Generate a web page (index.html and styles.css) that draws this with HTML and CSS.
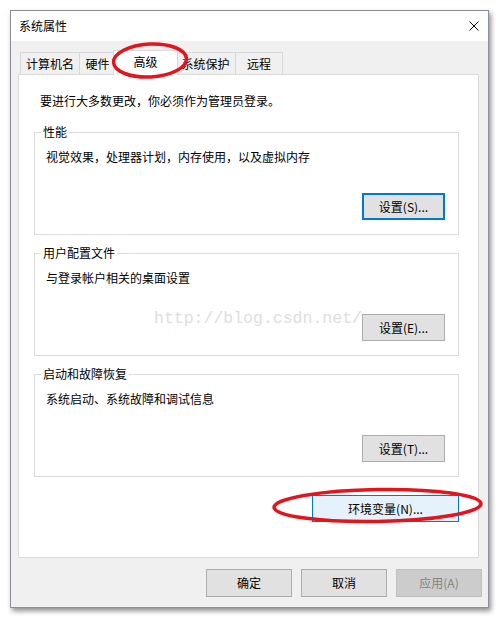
FILE: index.html
```html
<!DOCTYPE html>
<html lang="zh-CN">
<head>
<meta charset="utf-8">
<title>系统属性</title>
<link rel="stylesheet" href="styles.css">
</head>
<body>
<div class="page">
  <div class="window">
    <div class="titlebar">
      <span class="title">系统属性</span>
      <svg class="close" width="10" height="10" viewBox="0 0 10 10"><path d="M0.5 0.5 L9.5 9.5 M9.5 0.5 L0.5 9.5" stroke="#000" stroke-width="1" fill="none"/></svg>
    </div>
    <div class="content">
      <div class="tabs">
        <div class="tab tab-first">计算机名</div>
        <div class="tab tab-hw">硬件</div>
        <div class="tab tab-active">高级</div>
        <div class="tab tab-prot">系统保护</div>
        <div class="tab tab-remote">远程</div>
      </div>
      <div class="panel">
        <div class="intro">要进行大多数更改，你必须作为管理员登录。</div>
        <fieldset class="group first-group">
          <legend>性能</legend>
          <div class="group-desc">视觉效果，处理器计划，内存使用，以及虚拟内存</div>
          <div class="group-actions"><button class="btn focused">设置(S)...</button></div>
        </fieldset>
        <fieldset class="group">
          <legend>用户配置文件</legend>
          <div class="group-desc">与登录帐户相关的桌面设置</div>
          <div class="group-actions"><button class="btn">设置(E)...</button></div>
        </fieldset>
        <fieldset class="group">
          <legend>启动和故障恢复</legend>
          <div class="group-desc">系统启动、系统故障和调试信息</div>
          <div class="group-actions"><button class="btn">设置(T)...</button></div>
        </fieldset>
        <div class="env-row"><button class="btn env">环境变量(N)...</button></div>
      </div>
      <div class="footer">
        <button class="btn wide">确定</button>
        <button class="btn wide">取消</button>
        <button class="btn wide disabled">应用(A)</button>
      </div>
    </div>
  </div>
</div>
<div class="watermark">http://blog.csdn.net/</div>
<svg class="marks" width="500" height="619" viewBox="0 0 500 619">
  <ellipse cx="150" cy="60.5" rx="36.5" ry="16.5" transform="rotate(-3 150 60.5)" fill="none" stroke="#e3141c" stroke-width="3.5"/>
  <ellipse cx="377.5" cy="505.5" rx="103.5" ry="16" transform="rotate(-1 377.5 505.5)" fill="none" stroke="#e3141c" stroke-width="3.5"/>
</svg>
</body>
</html>
```
FILE: styles.css
```css
* { box-sizing: border-box; }
body {
  margin: 0;
  width: 500px;
  height: 619px;
  position: relative;
  overflow: hidden;
  background: #fff;
  font: 12px/16px "Noto Sans CJK SC", "Microsoft YaHei", sans-serif;
  color: #000;
}
.page { padding: 10px 0 0 10px; }
.window {
  width: 479px;
  height: 598px;
  border: 1px solid #8a9098;
  box-shadow: 2px 3px 5px rgba(0,0,0,0.45);
  background: #f0f0f0;
  display: flex;
  flex-direction: column;
}
.titlebar {
  height: 30px;
  background: #fff;
  display: flex;
  align-items: center;
  justify-content: space-between;
  padding: 0 9px 0 8px;
  flex: none;
}
.content {
  flex: 1;
  display: flex;
  flex-direction: column;
  padding: 9px 9px 9px 7px;
}
.tabs {
  height: 24px;
  display: flex;
  align-items: flex-end;
  padding-left: 2px;
  position: relative;
  z-index: 1;
  flex: none;
}
.tab {
  height: 22px;
  border: 1px solid #d9d9d9;
  border-bottom: 0;
  background: #f0f0f0;
  display: flex;
  align-items: center;
  justify-content: center;
  margin-left: -1px;
}
.tab-first { width: 60px; margin-left: 0; }
.tab-hw { width: 37px; }
.tab-active {
  width: 65px;
  height: 25px;
  margin-left: -3px;
  margin-bottom: -1px;
  background: #fff;
  position: relative;
  z-index: 2;
  padding-bottom: 2px;
}
.tab-prot { width: 61px; margin-left: -3px; }
.tab-remote { width: 48px; }
.panel {
  height: 484px;
  flex: none;
  background: #fff;
  border: 1px solid #d9d9d9;
  padding: 18px 19px 0 15px;
}
.intro { margin-left: 6px; }
.group {
  margin: 10px 0 0 0;
  border: 1px solid #dcdcdc;
  padding: 9px 13px 14px 6px;
  min-width: 0;
}
.first-group { margin-top: 15px; }
.group legend {
  padding: 0 2px;
  line-height: 16px;
}
.group-desc { margin-left: 5px; }
.group-actions {
  display: flex;
  justify-content: flex-end;
  margin-top: 28px;
}
.btn {
  height: 27px;
  width: 83px;
  background: #e1e1e1;
  border: 1px solid #adadad;
  font: inherit;
  color: #000;
  padding: 0;
  margin: 0;
}
.btn.focused { border: 2px solid #0078d7; }
.env-row {
  display: flex;
  justify-content: flex-end;
  margin-top: 18px;
}
.btn.env {
  width: 147px;
  background: #e5f1fb;
  border-color: #0078d7;
}
.footer {
  display: flex;
  justify-content: flex-end;
  gap: 9px;
  margin-top: 11px;
  margin-right: -3px;
}
.btn.wide { width: 86px; height: 28px; }
.btn.disabled {
  background: #cccccc;
  border-color: #bfbfbf;
  color: #838383;
}
.watermark {
  position: absolute;
  left: 154px;
  top: 309px;
  font: 16.5px/20px "Liberation Mono", monospace;
  color: #dedede;
  white-space: nowrap;
  z-index: 5;
}
.marks {
  position: absolute;
  left: 0;
  top: 0;
  z-index: 10;
  pointer-events: none;
}
```
